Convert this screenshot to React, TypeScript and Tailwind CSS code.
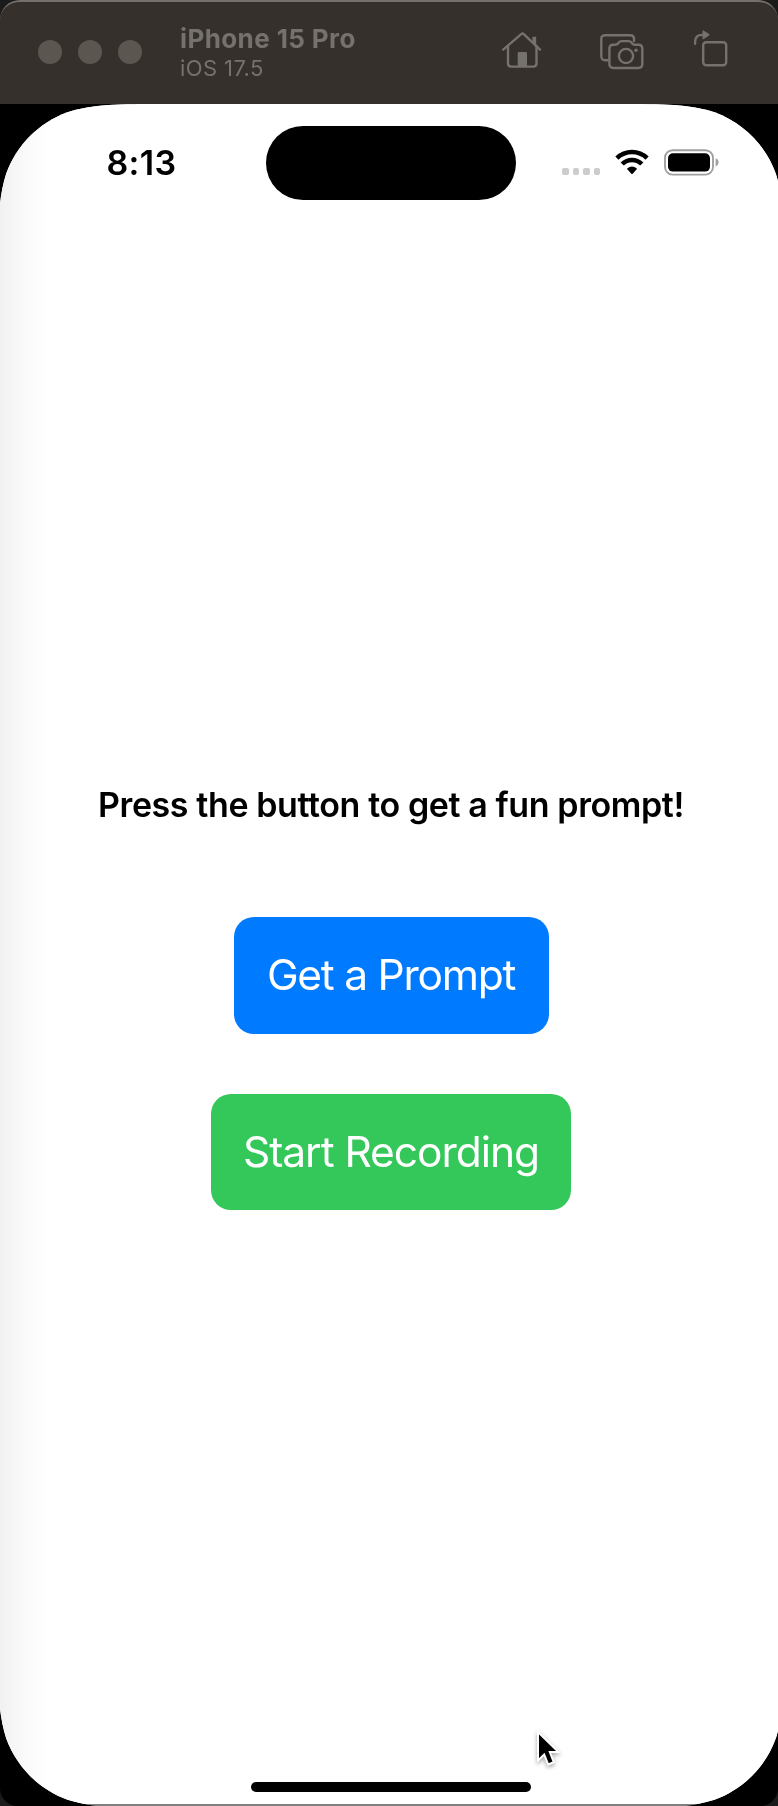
import React from "react";

function HomeIcon() {
  return (
    <svg width="42" height="40" viewBox="0 0 42 40" fill="none" stroke="#75716c" strokeWidth="2.4" strokeLinecap="round" strokeLinejoin="round">
      <path d="M2.2 18.6 20.5 2.9Q21.5 2.1 22.5 2.9L39 18.6" />
      <path d="M7 15V32.3Q7 35.6 10.3 35.6H32.2Q35.5 35.6 35.5 32.3V15" />
      <path d="M31.4 5.8H35.2V14.4L31.4 10.8Z" fill="#75716c" stroke="none" />
      <path d="M16.7 36V22.4Q16.7 21 18.1 21H24.6Q26 21 26 22.4V36Z" fill="#75716c" stroke="none" />
    </svg>
  );
}

function ScreenshotIcon() {
  return (
    <svg width="44" height="36" viewBox="0 0 44 36" fill="none" stroke="#75716c" strokeWidth="2.4" strokeLinecap="round" strokeLinejoin="round">
      <path d="M8.3 26.2H5.2Q1.3 26.2 1.3 22.3V5Q1.3 1.2 5.2 1.2H30.2Q34 1.2 34 4.9V7" />
      <path d="M13.3 10.7H15.2Q17 10.7 18 9.4L18.7 8.5Q19.9 7.1 21.7 7.1H28.6Q30.4 7.1 31.5 8.5L32.2 9.4Q33.2 10.7 35 10.7H38.3Q42.3 10.7 42.3 14.7V30Q42.3 34 38.3 34H13.3Q9.4 34 9.4 30V14.7Q9.4 10.7 13.3 10.7Z" />
      <circle cx="26" cy="22" r="7.1" />
      <circle cx="36" cy="16.3" r="1.7" fill="#75716c" stroke="none" />
    </svg>
  );
}

function RotateIcon() {
  return (
    <svg width="36" height="38" viewBox="0 0 36 38" fill="none" stroke="#75716c" strokeWidth="2.4" strokeLinecap="round">
      <rect x="10.2" y="12.2" width="23" height="23" rx="3" />
      <path d="M2.1 13.8V12Q2.1 4.9 9.2 4.9H10" />
      <path d="M9.5 1.2Q9.5 0 10.4.6L16.2 4.1Q17 4.9 16.2 5.6L10.4 9.2Q9.5 9.7 9.5 8.6Z" fill="#75716c" stroke="none" />
    </svg>
  );
}

function WifiIcon() {
  return (
    <svg width="34" height="26" viewBox="0 0 34 26" fill="none" stroke="#000" strokeWidth="4.5">
      <path d="M1.9 9.2A21.6 21.6 0 0 1 32.1 9.2" />
      <path d="M7.2 15A13.9 13.9 0 0 1 26.8 15" />
      <path d="M11.9 19.8Q17 15.4 22.1 19.8L17.7 24.7Q17 25.4 16.3 24.7Z" fill="#000" stroke="none" />
    </svg>
  );
}

function BatteryIcon() {
  return (
    <svg width="56" height="27" viewBox="0 0 56 27" fill="none">
      <rect x="1" y="1.2" width="48" height="24.4" rx="7.6" stroke="#a0a0a0" strokeWidth="1.9" />
      <rect x="4" y="4.2" width="42" height="18.4" rx="5" fill="#000" />
      <path d="M51.6 9.2Q54.6 10.4 54.6 13.2T51.6 17.4Z" fill="#a0a0a0" />
    </svg>
  );
}

function TitleBar() {
  return (
    <header className="flex h-[104px] w-[778px] shrink-0 rounded-t-[20px] border-t-2 border-[#75706c] bg-[#36302c]">
      <div className="flex w-[180px] gap-4 pl-[38px] pt-[38px]">
        <span className="size-6 rounded-full bg-[#5b5750]" />
        <span className="size-6 rounded-full bg-[#5b5750]" />
        <span className="size-6 rounded-full bg-[#5b5750]" />
      </div>
      <div className="flex-1 pt-[21px] text-[#75716c]">
        <h1 className="h-8 whitespace-nowrap text-[26px] font-bold leading-8 tracking-[0.4px]">iPhone 15 Pro</h1>
        <p className="whitespace-nowrap text-[22px] leading-[26px] tracking-[0.4px]">iOS 17.5</p>
      </div>
      <div className="flex w-[277px] items-start pt-[28.5px]">
        <HomeIcon />
        <div className="ml-[57px] pt-[3px]"><ScreenshotIcon /></div>
        <div className="ml-[49px] -mt-[0.5px]"><RotateIcon /></div>
      </div>
    </header>
  );
}

function StatusBar() {
  return (
    <div className="flex h-24 pt-[22px]">
      <div className="w-[268px] pl-[108.5px] pt-[13px] text-[34px] font-semibold leading-[48px] tracking-[0.3px]">8:13</div>
      <div className="h-[74px] w-[250px] rounded-full bg-black" />
      <div className="flex items-start pl-[46px] pt-[23px]">
        <div className="flex gap-1 pt-[19px]">
          <span className="size-[6.6px] rounded-[2px] bg-[#cccccc]" />
          <span className="size-[6.6px] rounded-[2px] bg-[#cccccc]" />
          <span className="size-[6.6px] rounded-[2px] bg-[#cccccc]" />
          <span className="size-[6.6px] rounded-[2px] bg-[#cccccc]" />
        </div>
        <div className="ml-[15px]"><WifiIcon /></div>
        <div className="ml-[15px]"><BatteryIcon /></div>
      </div>
    </div>
  );
}

export default function App() {
  return (
    <div className="relative flex h-[1806px] w-[778px] flex-col overflow-hidden bg-[#1b1b1b] font-['Inter',sans-serif]">
      <TitleBar />
      <div className="flex-1 overflow-hidden rounded-b-[18px] bg-black">
        <main className="-ml-[2px] flex h-[1704px] w-[786px] flex-col bg-white bg-[linear-gradient(to_right,#f0f0f0_0px,#f7f7f7_18px,#fcfcfc_34px,#ffffff_54px)] text-black [clip-path:path('M168.2,0L617.8,0C666.3,0,690.5,0,716.5,8.24C745,18.6,767.4,41,777.76,69.5C786,95.5,786,119.7,786,168.2L786,1535.8C786,1584.3,786,1608.5,777.76,1634.5C767.4,1663,745,1685.4,716.5,1695.76C690.5,1704,666.3,1704,617.8,1704L168.2,1704C119.7,1704,95.5,1704,69.5,1695.76C41,1685.4,18.6,1663,8.24,1634.5C0,1608.5,0,1584.3,0,1535.8L0,168.2C0,119.7,0,95.5,8.24,69.5C18.6,41,41,18.6,69.5,8.24C95.5,0,119.7,0,168.2,0Z')]">
          <StatusBar />
          <div className="flex flex-1 flex-col items-center pt-[581px]">
            <p className="h-[48px] whitespace-nowrap text-[34px] font-semibold leading-[48px] tracking-[-0.4px]">Press the button to get a fun prompt!</p>
            <button className="mt-[88px] flex h-[116.5px] w-[315px] items-center justify-center whitespace-nowrap rounded-[20px] bg-[#007aff] text-[42.5px] tracking-[-1.25px] text-white">Get a Prompt</button>
            <button className="mt-[60px] flex h-[116.5px] w-[360px] items-center justify-center whitespace-nowrap rounded-[20px] bg-[#34c759] text-[42.5px] tracking-[-1.05px] text-white">Start Recording</button>
          </div>
          <div className="mb-4 h-[10px] w-[280px] self-center rounded-full bg-black" />
        </main>
      </div>
      <div className="pointer-events-none absolute inset-x-0 bottom-0 h-10 rounded-b-[18px] border-b-2 border-[#808080] mix-blend-multiply" />
      <svg className="absolute left-[533px] top-[1729px] drop-shadow-[0_2px_2px_rgba(0,0,0,0.35)]" width="28" height="38" viewBox="0 0 28 38">
        <path d="M5 3V31.5L11.2 25.5L15.2 35.5L20.8 33.1L16.8 23H25.5Z" fill="#000" stroke="#fff" strokeWidth="2" />
      </svg>
    </div>
  );
}
